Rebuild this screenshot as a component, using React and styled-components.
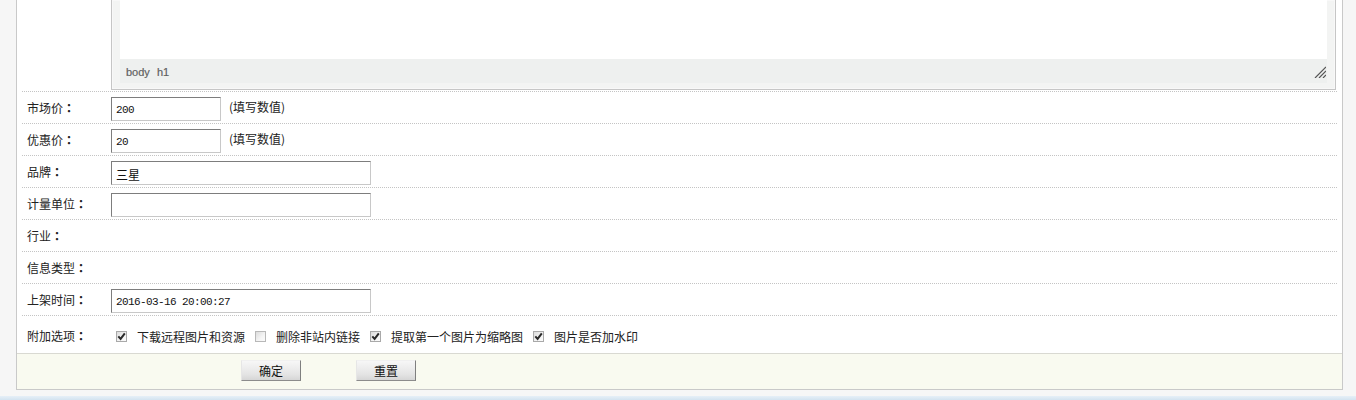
import React from 'react'
import styled, { createGlobalStyle } from 'styled-components'

const GlobalStyle = createGlobalStyle`
  html, body {
    margin: 0;
    padding: 0;
    background: #f6f6f6;
  }
  body {
    font-family: "Noto Sans CJK SC", "Liberation Sans", sans-serif;
    font-size: 12px;
    color: #222;
  }
`

const Page = styled.div`
  width: 1356px;
  height: 400px;
  padding: 0 13px 0 16px;
  box-sizing: border-box;
  display: flex;
  flex-direction: column;
  overflow: hidden;
`

const Panel = styled.div`
  background: #fff;
  border: 1px solid #c9c9c9;
  border-top: none;
`

const FormTable = styled.div`
  margin: 0 5px 0 5px;
`

const Row = styled.div`
  display: grid;
  grid-template-columns: 89px 1fr;
  align-items: center;
  box-sizing: border-box;
  height: ${p => p.$h || 32}px;
  padding-top: ${p => p.$pt || 0}px;
  border-bottom: ${p => (p.$last ? 'none' : '1px dotted #c4c4c4')};
`

const Label = styled.div`
  padding-left: 5px;
  line-height: 14px;
  color: #222;
`

// full-width colon, centred in its cell as in a song-style font
const Colon = styled.span`
  font-family: "Noto Sans CJK JP", "Noto Sans CJK SC", sans-serif;
  font-weight: 700;
`

const Cell = styled.div`
  display: flex;
  align-items: center;
  min-width: 0;
`

const EditorRow = styled.div`
  display: grid;
  grid-template-columns: 89px 1fr;
  padding-bottom: 1px;
  border-bottom: 1px dotted #c4c4c4;
`

const Editor = styled.div`
  border: 1px solid #c6c6c6;
  border-top: none;
  box-shadow: inset 0 0 0 1px #f8f8f8;
  background: #f3f4f3;
  padding: 0 8px 6px 8px;
  margin-right: 1px;
`

const EditArea = styled.div`
  height: 59px;
  background: #fff;
`

const StatusBar = styled.div`
  height: 24px;
  background: #eef0ef;
  display: flex;
  align-items: center;
  justify-content: space-between;
  padding: 2px 1px 0 6px;
  box-sizing: border-box;
  font-family: "Liberation Sans", Arial, sans-serif;
  font-size: 11px;
  color: #5f5f5f;
  word-spacing: 4px;
  -webkit-text-stroke: 0.2px #5f5f5f;
`

const Input = styled.input`
  box-sizing: border-box;
  width: ${p => p.$w}px;
  height: 24px;
  margin: 3px 0 0 0;
  padding: 2px 4px 0;
  border: 1px solid;
  border-color: #7d7d7d #c8c8c8 #c8c8c8 #7d7d7d;
  background: #fff;
  color: #111;
  outline: none;
  font-family: ${p => (p.$cjk ? '"Noto Sans CJK SC", sans-serif' : '"Liberation Mono", "Noto Sans CJK SC", monospace')};
  font-size: ${p => (p.$cjk ? 12 : 11)}px;
  letter-spacing: ${p => (p.$cjk ? 0 : -0.6)}px;
`

const Hint = styled.span`
  margin-left: 8px;
  margin-top: -3px;
  color: #222;
`

const Options = styled.div`
  display: flex;
  align-items: center;
  padding-left: 5px;
  padding-top: 1px;
`

const Option = styled.label`
  display: flex;
  align-items: center;
  gap: 10px;
  margin-right: 10px;
`

const Box = styled.span`
  width: 11px;
  height: 11px;
  box-sizing: border-box;
  border: 1px solid ${p => (p.$checked ? '#a9a9a9' : '#b8b8b8')};
  background: linear-gradient(135deg, #dcdcdc 0%, #f4f4f4 60%, #fbfbfb 100%);
  display: inline-flex;
  align-items: center;
  justify-content: center;
`

const Footer = styled.div`
  border-top: 1px solid #d9d9d2;
  background: #f9faf0;
  height: 36px;
  box-sizing: border-box;
  padding: 6px 0 0 224px;
  display: flex;
  gap: 55px;
`

const Button = styled.button`
  width: 60px;
  height: 21px;
  padding: 0;
  box-sizing: border-box;
  border: 1px solid;
  border-color: #f0f0f0 #7f7f7f #8c8c8c #e6e6e6;
  background: linear-gradient(#f7f7f7, #e4e4e4 70%, #d6d6d6);
  font-family: "Noto Sans CJK SC", sans-serif;
  font-size: 12px;
  color: #111;
  line-height: 18px;
`

const BottomStrip = styled.div`
  margin-top: 6px;
  margin-left: -16px;
  margin-right: -13px;
  height: 4px;
  background: linear-gradient(#e6eff7, #d3e3f0);
`

function Check({ checked }) {
  return (
    <Box $checked={checked}>
      {checked && (
        <svg width="9" height="9" viewBox="0 0 9 9">
          <path d="M1.3 4.4 L3.6 6.9 L7.8 1.4" fill="none" stroke="#2a2a2a" strokeWidth="2" />
        </svg>
      )}
    </Box>
  )
}

function ResizeGrip() {
  return (
    <svg width="12" height="12" viewBox="0 0 12 12">
      <path d="M1 12 L12 1 M5 12 L12 5 M9 12 L12 9" stroke="#555" strokeWidth="1.2" />
    </svg>
  )
}

const options = [
  { text: '下载远程图片和资源', checked: true },
  { text: '删除非站内链接', checked: false },
  { text: '提取第一个图片为缩略图', checked: true },
  { text: '图片是否加水印', checked: true },
]

function FieldLabel({ text }) {
  return (
    <Label>
      {text}
      <Colon>：</Colon>
    </Label>
  )
}

export default function App() {
  return (
    <Page>
      <GlobalStyle />
      <Panel>
        <FormTable>
          <EditorRow>
            <div />
            <Editor>
              <EditArea />
              <StatusBar>
                <span>body h1</span>
                <ResizeGrip />
              </StatusBar>
            </Editor>
          </EditorRow>

          <Row>
            <FieldLabel text="市场价" />
            <Cell>
              <Input $w={110} defaultValue="200" />
              <Hint>(填写数值)</Hint>
            </Cell>
          </Row>
          <Row>
            <FieldLabel text="优惠价" />
            <Cell>
              <Input $w={110} defaultValue="20" />
              <Hint>(填写数值)</Hint>
            </Cell>
          </Row>
          <Row>
            <FieldLabel text="品牌" />
            <Cell>
              <Input $w={260} $cjk defaultValue="三星" />
            </Cell>
          </Row>
          <Row>
            <FieldLabel text="计量单位" />
            <Cell>
              <Input $w={260} defaultValue="" />
            </Cell>
          </Row>
          <Row>
            <FieldLabel text="行业" />
            <Cell />
          </Row>
          <Row>
            <FieldLabel text="信息类型" />
            <Cell />
          </Row>
          <Row>
            <FieldLabel text="上架时间" />
            <Cell>
              <Input $w={260} defaultValue="2016-03-16 20:00:27" />
            </Cell>
          </Row>
          <Row $last $h={37} $pt={3}>
            <FieldLabel text="附加选项" />
            <Options>
              {options.map(o => (
                <Option key={o.text}>
                  <Check checked={o.checked} />
                  <span>{o.text}</span>
                </Option>
              ))}
            </Options>
          </Row>
        </FormTable>
        <Footer>
          <Button>确定</Button>
          <Button>重置</Button>
        </Footer>
      </Panel>
      <BottomStrip />
    </Page>
  )
}
